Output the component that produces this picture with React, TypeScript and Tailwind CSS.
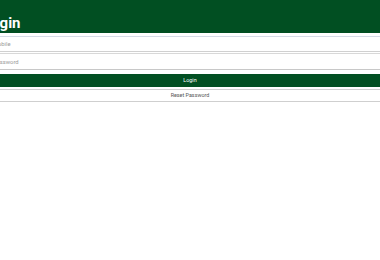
export default function App() {
  return (
    <div className="w-[380px] h-[260px] overflow-hidden bg-white font-['Roboto','Liberation_Sans',sans-serif]">
      <div className="h-[33px] bg-[#014f22] flex items-end pb-[1px]">
        <h1 className="-ml-[17px] text-[15px] leading-[18px] font-bold text-white">Login</h1>
      </div>

      <form className="-mx-[9px] mt-[3px] flex flex-col">
        <input
          type="tel"
          placeholder="Mobile"
          className="h-[16px] px-[2px] bg-white border-y border-t-[#d4dbe6] border-b-[#d0d0d0] text-[5.8px] text-[#555] placeholder:text-[#9a9a9a] outline-none"
        />
        <input
          type="password"
          placeholder="Password"
          className="mt-[1px] h-[17px] px-[2px] bg-white border-y border-t-[#d8d8d8] border-b-[#c8c8c8] text-[5.8px] text-[#555] placeholder:text-[#9a9a9a] outline-none"
        />
        <button
          type="button"
          className="mt-[4px] h-[13px] bg-[#014f22] text-white text-[5.4px] leading-none"
        >
          Login
        </button>
        <button
          type="button"
          className="mt-[2px] h-[13px] bg-white border-y border-[#cfcfcf] text-[#555] text-[5.4px] leading-none"
        >
          Reset Password
        </button>
      </form>
    </div>
  );
}
